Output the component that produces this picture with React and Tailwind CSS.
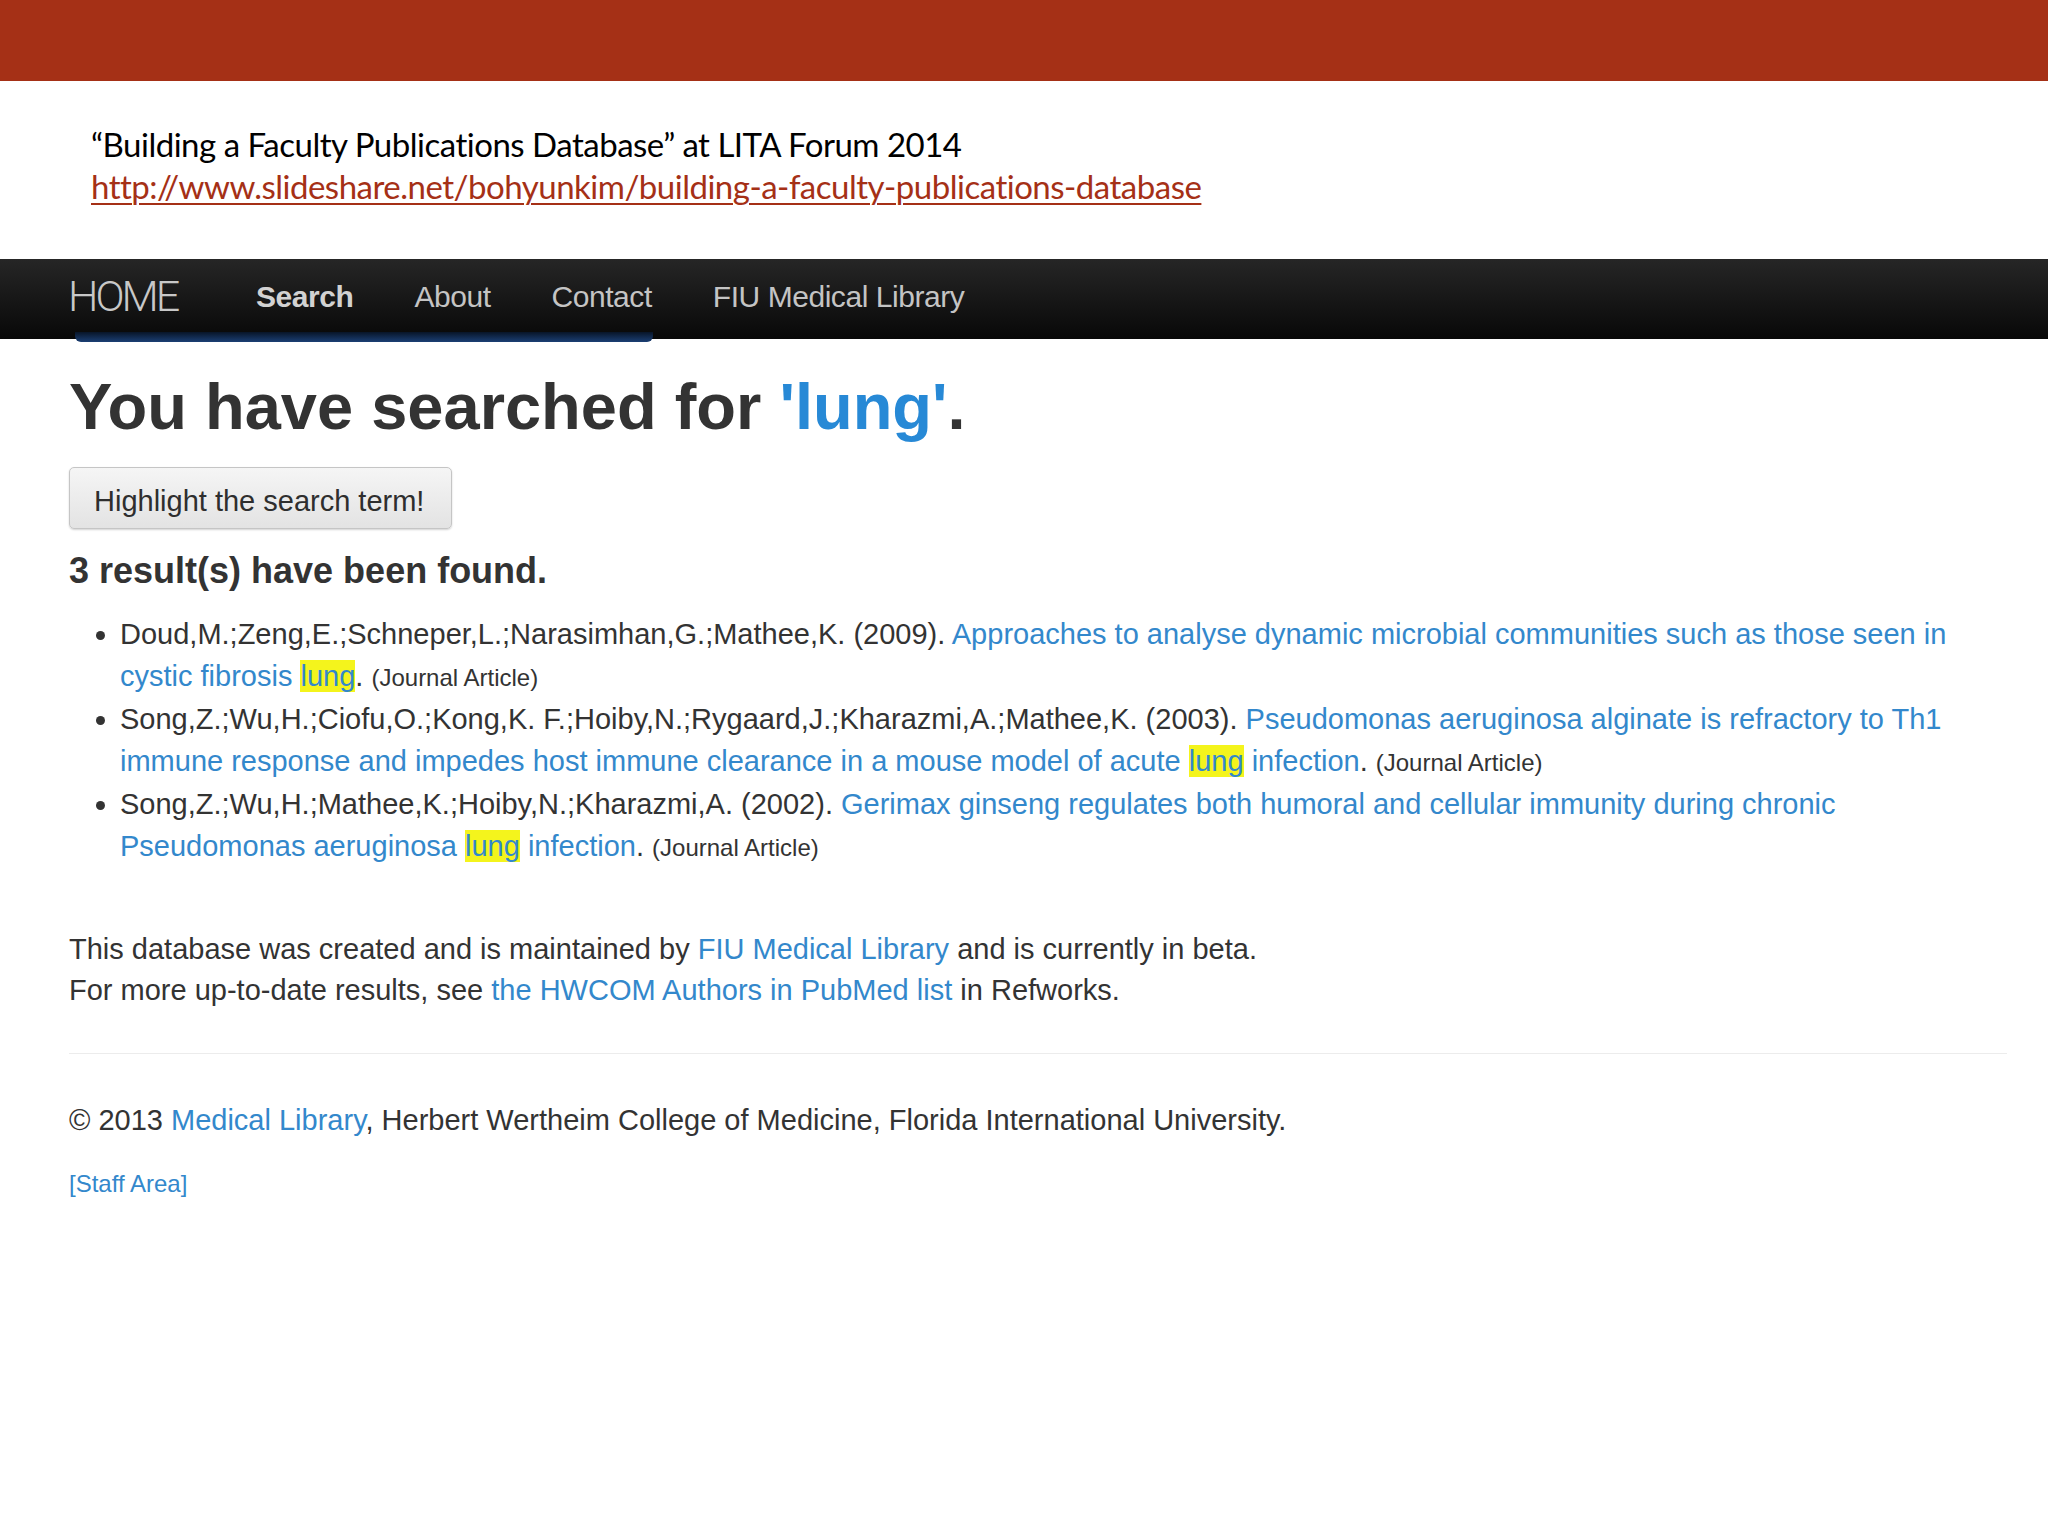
// App.jsx — slide with a screenshot of the faculty publications search page

const ลิงก์ = 'text-[#3388cc]'

function ไฮไลต์({ children }) {
  return <span className="bg-[#f4f41c]">{children}</span>
}

const ผลลัพธ์ = [
  {
    id: 1,
    ผู้แต่ง: 'Doud,M.;Zeng,E.;Schneper,L.;Narasimhan,G.;Mathee,K. (2009).',
    ชื่อ: (
      <>
        Approaches to analyse dynamic microbial communities such as those seen in cystic fibrosis <ไฮไลต์>lung</ไฮไลต์>
      </>
    ),
  },
  {
    id: 2,
    ผู้แต่ง: 'Song,Z.;Wu,H.;Ciofu,O.;Kong,K. F.;Hoiby,N.;Rygaard,J.;Kharazmi,A.;Mathee,K. (2003).',
    ชื่อ: (
      <>
        Pseudomonas aeruginosa alginate is refractory to Th1 immune response and impedes host immune clearance in a mouse model of acute <ไฮไลต์>lung</ไฮไลต์> infection
      </>
    ),
  },
  {
    id: 3,
    ผู้แต่ง: 'Song,Z.;Wu,H.;Mathee,K.;Hoiby,N.;Kharazmi,A. (2002).',
    ชื่อ: (
      <>
        Gerimax ginseng regulates both humoral and cellular immunity during chronic Pseudomonas aeruginosa <ไฮไลต์>lung</ไฮไลต์> infection
      </>
    ),
  },
]

export default function App() {
  return (
    <div className="min-h-[1536px] w-[2048px] bg-white">
      {/* slide top bar */}
      <div className="h-[81px] bg-[#a53016]" />

      {/* slide caption */}
      <div className="pl-[91px] pt-[42px] text-[33px] leading-[42px] tracking-[-0.015em] text-black" style={{ fontFamily: 'Lato, "Open Sans", sans-serif' }}>
        <p>“Building a Faculty Publications Database” at LITA Forum 2014</p>
        <p className="text-[#a53016] underline decoration-[2px] underline-offset-[4px]">
          http://www.slideshare.net/bohyunkim/building-a-faculty-publications-database
        </p>
      </div>

      {/* screenshot of the site */}
      <div className="mt-[52px] text-[#333333]" style={{ fontFamily: '"Liberation Sans", Arial, sans-serif' }}>
        {/* navbar */}
        <div className="relative h-[80px] bg-[linear-gradient(to_bottom,#262626,#080808)]">
          <div className="flex h-full items-center pb-[6px] pl-[68px]">
            <div className="w-[188px]">
              <span className="text-[43px] font-light tracking-[-0.07em] text-[#c8c8c8]" style={{ fontFamily: 'Roboto, "Liberation Sans", sans-serif' }}>
                HOME
              </span>
            </div>
            <div className="flex items-center gap-[61px] text-[30px] tracking-[-0.015em]">
              <span className="font-bold text-[#d2d2d2]">Search</span>
              <span className="text-[#c4c4c4]">About</span>
              <span className="text-[#c4c4c4]">Contact</span>
              <span className="text-[#c4c4c4]">FIU Medical Library</span>
            </div>
          </div>
          {/* active tab glow */}
          <div className="absolute left-[75px] top-[73px] h-[10px] w-[578px] rounded-b-[6px] bg-[linear-gradient(to_bottom,#081528,#1b3f74)]" />
        </div>

        <div className="pl-[69px] pr-[41px]">
          <h1 className="mt-[33px] text-[65px] font-bold leading-[70px]">
            You have searched for <span className="text-[#2789d6]">'lung'</span>.
          </h1>

          <button className="mt-[25px] h-[62px] w-[383px] rounded-[5px] border border-[#c5c5c5] bg-[linear-gradient(to_bottom,#f5f5f5,#e3e3e3)] pl-[24px] pt-[8px] text-left text-[29px] text-[#2e2e2e] shadow-[0_1px_2px_rgba(0,0,0,0.18)]">
            Highlight the search term!
          </button>

          <h4 className="mt-[21px] text-[36px] font-bold leading-[42px]">3 result(s) have been found.</h4>

          <ul className="mt-[22px] list-disc pl-[51px] text-[29px] leading-[41.5px]">
            {ผลลัพธ์.map(function (r, i) {
              return (
                <li key={r.id} className={i > 0 ? 'mt-[1px]' : ''}>
                  {r.ผู้แต่ง} <span className={ลิงก์}>{r.ชื่อ}</span>. <span className="text-[24px]">(Journal Article)</span>
                </li>
              )
            })}
          </ul>

          <p className="mt-[61px] text-[29px] leading-[41px]">
            This database was created and is maintained by <span className={ลิงก์}>FIU Medical Library</span> and is currently in beta.
            <br />
            For more up-to-date results, see <span className={ลิงก์}>the HWCOM Authors in PubMed list</span> in Refworks.
          </p>

          <hr className="mt-[42px] border-t border-[#ececec]" />

          <p className="mt-[46px] text-[29px] leading-[41px]">
            © 2013 <span className={ลิงก์}>Medical Library</span>, Herbert Wertheim College of Medicine, Florida International University.
          </p>
          <p className={'mt-[26px] text-[24px] leading-[34px] ' + ลิงก์}>[Staff Area]</p>
        </div>
      </div>
    </div>
  )
}
